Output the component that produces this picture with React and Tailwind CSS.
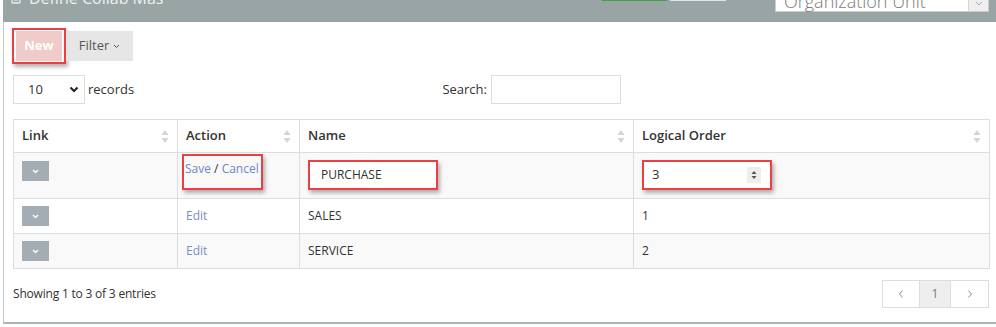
import React from "react";

function SortIcon() {
  return (
    <svg width="8" height="13" viewBox="0 0 8 13" className="shrink-0">
      <path d="M4 0 L7.5 5 L0.5 5 Z" fill="#d4d4d4" />
      <path d="M4 13 L7.5 8 L0.5 8 Z" fill="#d4d4d4" />
    </svg>
  );
}

function LinkBtn() {
  return (
    <div className="w-[27px] h-[20px] bg-[#a3adb3] flex items-center justify-center">
      <svg width="7" height="5" viewBox="0 0 7 5">
        <path d="M1 1 L3.5 3.5 L6 1" stroke="#ffffff" strokeWidth="1.4" fill="none" />
      </svg>
    </div>
  );
}

function Th({ children, w }) {
  return (
    <th className={`h-[33px] ${w} border border-[#dddddd] px-[8px] text-left align-middle font-semibold text-[13px] text-[#333]`}>
      <div className="flex items-center justify-between">
        <span>{children}</span>
        <SortIcon />
      </div>
    </th>
  );
}

export default function App() {
  const rows = [
    { name: "SALES", order: "1", bg: "bg-white" },
    { name: "SERVICE", order: "2", bg: "bg-[#f9f9f9]" },
  ];
  return (
    <div className="w-[996px] h-[327px] overflow-hidden bg-white font-['Open_Sans',sans-serif] text-[#333]">
      {/* header bar */}
      <div className="ml-[3px] h-[22px] bg-[#98a5a4] flex items-start overflow-hidden">
        <div className="w-[599px] shrink-0 flex items-start pl-[8px] -mt-[11px]">
          <svg width="10" height="18" viewBox="0 0 10 18">
            <rect x="1" y="4" width="8" height="10" rx="1" stroke="#e9eded" strokeWidth="1.3" fill="none" />
            <path d="M3 11 H7" stroke="#e9eded" strokeWidth="1.2" />
          </svg>
          <span className="ml-[8px] text-[16px] leading-[18px] text-[#eef1f1]">Define Collab Mas</span>
        </div>
        <div className="w-[65px] h-[1px] bg-[#43a047] shrink-0" />
        <div className="ml-[3px] w-[56px] h-[1px] bg-[#dfe3e3] shrink-0" />
        <div className="ml-[49px] w-[214px] h-[26px] -mt-[14px] bg-white border border-[#c9cfcf] flex shrink-0">
          <span className="flex-1 pl-[8px] mt-[1px] text-[18px] leading-[26px] font-light text-[#7a7a7a]">Organization Unit</span>
          <div className="w-[20px] h-full border-l border-[#d5d5d5] bg-[#efefef] flex items-end justify-center pb-[5px]">
            <svg width="8" height="5" viewBox="0 0 8 5">
              <path d="M1 1 L4 4 L7 1" stroke="#a8a8a8" strokeWidth="1" fill="none" />
            </svg>
          </div>
        </div>
      </div>

      {/* panel body */}
      <div className="ml-[3px] h-[302px] border-l border-[#c5cbcb] border-b-2 border-b-[#aab4b4] pl-[9px] pr-[7px]">
        {/* toolbar */}
        <div className="pt-[6px] flex items-center -ml-[1px]">
          <div className="w-[54px] h-[36px] border-2 border-[#ea4043] shadow-[2px_3px_4px_rgba(0,0,0,0.3)] flex items-center justify-center">
            <div className="w-[46px] h-[30px] bg-[#f1caca] flex items-center justify-center text-white font-bold text-[13px]">
              New
            </div>
          </div>
          <div className="w-[67px] h-[30px] bg-[#e6e6e6] flex items-center justify-center text-[13px] text-[#555]">
            <span>Filter</span>
            <svg width="7" height="5" viewBox="0 0 7 5" className="ml-[4px] mt-[1px]">
              <path d="M1 1 L3.5 3.5 L6 1" stroke="#555" strokeWidth="1" fill="none" />
            </svg>
          </div>
        </div>

        {/* records / search */}
        <div className="mt-[11px] w-[608px] flex items-center">
          <div className="w-[72px] h-[29px] border border-[#dddddd] flex items-center justify-between pl-[14px] pr-[5px] text-[13px]">
            <span>10</span>
            <svg width="10" height="7" viewBox="0 0 10 7">
              <path d="M1.5 1.5 L5 5 L8.5 1.5" stroke="#222" strokeWidth="2" fill="none" />
            </svg>
          </div>
          <span className="ml-[3px] text-[13px]">records</span>
          <div className="ml-auto flex items-center">
            <span className="text-[13px] mr-[4px]">Search:</span>
            <div className="w-[130px] h-[29px] border border-[#dddddd]" />
          </div>
        </div>

        {/* table */}
        <table className="mt-[15px] w-[976px] border-collapse table-fixed">
          <thead>
            <tr className="bg-white">
              <Th w="w-[164px]">Link</Th>
              <Th w="w-[122px]">Action</Th>
              <Th w="w-[334px]">Name</Th>
              <Th w="w-[356px]">Logical Order</Th>
            </tr>
          </thead>
          <tbody className="text-[12px]">
            <tr className="bg-[#f9f9f9]">
              <td className="h-[46px] border border-[#dddddd] align-top px-[8px] pt-[8px]">
                <LinkBtn />
              </td>
              <td className="h-[46px] border border-[#dddddd] align-top pl-[4px] pt-[1px]">
                <div className="w-[81px] h-[36px] border-2 border-[#ea4043] shadow-[2px_3px_4px_rgba(0,0,0,0.3)] pl-[1px] pt-[4px] leading-[18px] whitespace-nowrap">
                  <span className="text-[#6d89c6]">Save</span>
                  <span className="text-[#333]"> / </span>
                  <span className="text-[#6d89c6]">Cancel</span>
                </div>
              </td>
              <td className="h-[46px] border border-[#dddddd] align-top px-[8px] pt-[7px]">
                <div className="w-[130px] h-[30px] border-2 border-[#ea4043] bg-white shadow-[2px_3px_4px_rgba(0,0,0,0.3)] pl-[11px] flex items-center">
                  PURCHASE
                </div>
              </td>
              <td className="h-[46px] border border-[#dddddd] align-top px-[8px] pt-[7px]">
                <div className="w-[130px] h-[30px] border-2 border-[#ea4043] bg-white shadow-[2px_3px_4px_rgba(0,0,0,0.3)] pl-[8px] pr-[9px] flex items-center justify-between text-[13px]">
                  <span>3</span>
                  <div className="w-[14px] h-[16px] bg-[#eeeeee] flex items-center justify-center">
                    <svg width="6" height="10" viewBox="0 0 6 10">
                      <path d="M3 1 L5.5 4 L0.5 4 Z" fill="#555" />
                      <path d="M3 9 L5.5 6 L0.5 6 Z" fill="#555" />
                    </svg>
                  </div>
                </div>
              </td>
            </tr>
            {rows.map((r) => (
              <tr key={r.name} className={r.bg}>
                <td className="h-[35px] border border-[#dddddd] align-top px-[8px] pt-[7px]">
                  <LinkBtn />
                </td>
                <td className="h-[35px] border border-[#dddddd] align-middle px-[8px] text-[#7b8ec9]">Edit</td>
                <td className="h-[35px] border border-[#dddddd] align-middle px-[8px]">{r.name}</td>
                <td className="h-[35px] border border-[#dddddd] align-middle px-[8px]">{r.order}</td>
              </tr>
            ))}
          </tbody>
        </table>

        {/* footer */}
        <div className="mt-[11px] flex items-center justify-between">
          <span className="text-[12px] tracking-[-0.2px]">Showing 1 to 3 of 3 entries</span>
          <div className="flex h-[28px] border border-[#dddddd]">
            <div className="w-[37px] flex items-center justify-center border-r border-[#dddddd]">
              <svg width="6" height="10" viewBox="0 0 6 10">
                <path d="M4.5 1.5 L1.5 5 L4.5 8.5" stroke="#7d8fae" strokeWidth="1" fill="none" />
              </svg>
            </div>
            <div className="w-[31px] flex items-center justify-center bg-[#eeeeee] border-r border-[#dddddd] text-[12px] text-[#777]">1</div>
            <div className="w-[37px] flex items-center justify-center">
              <svg width="6" height="10" viewBox="0 0 6 10">
                <path d="M1.5 1.5 L4.5 5 L1.5 8.5" stroke="#7d8fae" strokeWidth="1" fill="none" />
              </svg>
            </div>
          </div>
        </div>
      </div>
    </div>
  );
}
